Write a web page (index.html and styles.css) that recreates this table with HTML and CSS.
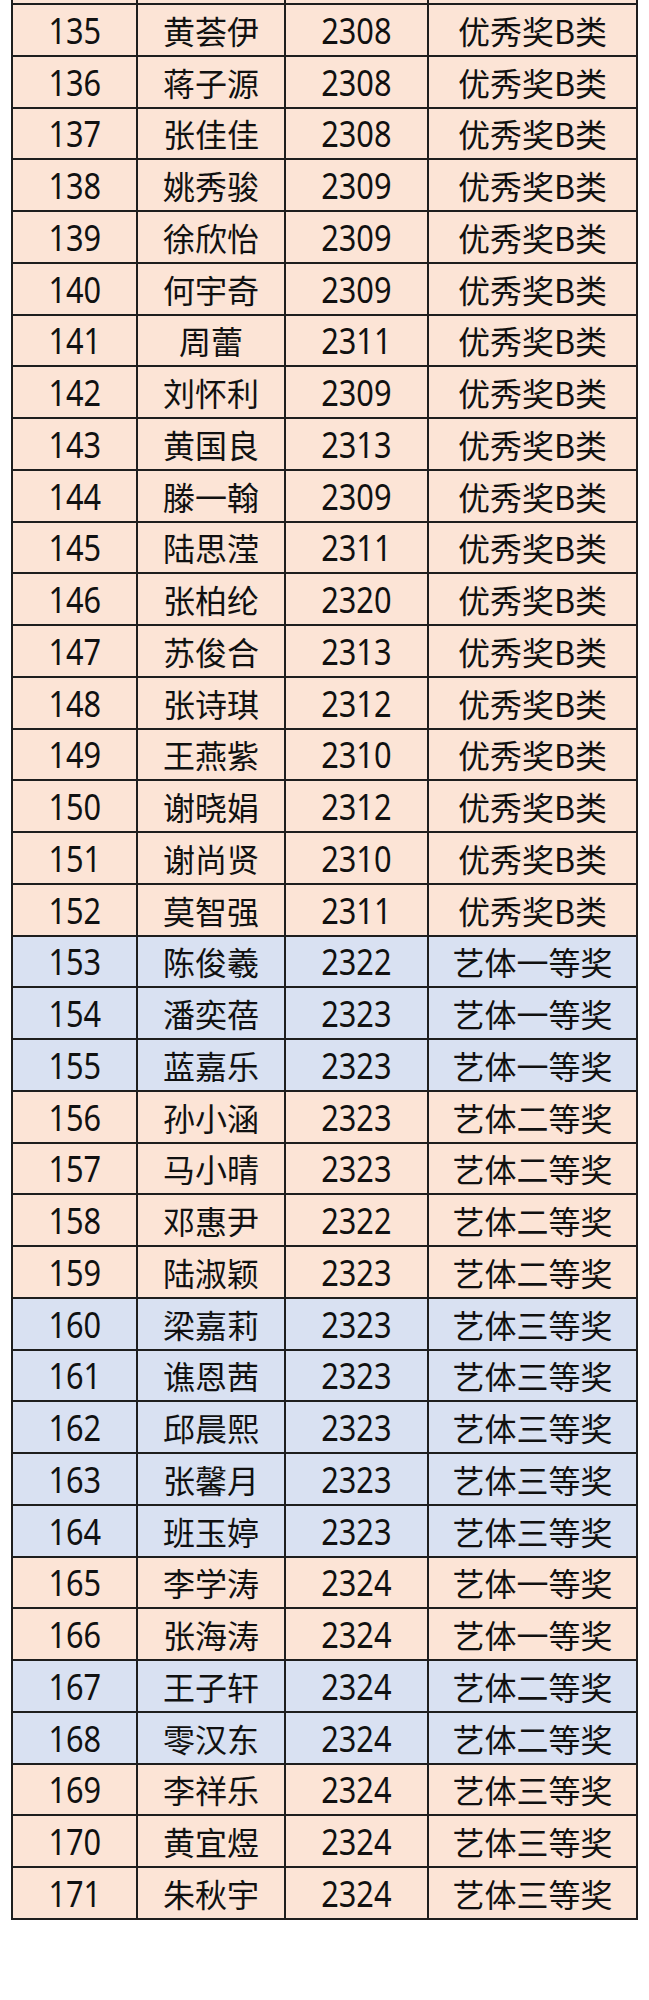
FILE: index.html
```html
<!DOCTYPE html>
<html lang="zh-CN">
<head>
<meta charset="utf-8">
<title>获奖名单</title>
<link rel="stylesheet" href="styles.css">
</head>
<body>
<div class="sheet">
<table class="awards">
<colgroup><col class="c1"><col class="c2"><col class="c3"><col class="c4"></colgroup>
<tbody>
<tr class="stub peach"><td></td><td></td><td></td><td></td></tr>
<tr class="peach"><td><span class="num">135</span></td><td><span class="txt">黄荟伊</span></td><td><span class="num">2308</span></td><td><span class="txt">优秀奖B类</span></td></tr>
<tr class="peach"><td><span class="num">136</span></td><td><span class="txt">蒋子源</span></td><td><span class="num">2308</span></td><td><span class="txt">优秀奖B类</span></td></tr>
<tr class="peach"><td><span class="num">137</span></td><td><span class="txt">张佳佳</span></td><td><span class="num">2308</span></td><td><span class="txt">优秀奖B类</span></td></tr>
<tr class="peach"><td><span class="num">138</span></td><td><span class="txt">姚秀骏</span></td><td><span class="num">2309</span></td><td><span class="txt">优秀奖B类</span></td></tr>
<tr class="peach"><td><span class="num">139</span></td><td><span class="txt">徐欣怡</span></td><td><span class="num">2309</span></td><td><span class="txt">优秀奖B类</span></td></tr>
<tr class="peach"><td><span class="num">140</span></td><td><span class="txt">何宇奇</span></td><td><span class="num">2309</span></td><td><span class="txt">优秀奖B类</span></td></tr>
<tr class="peach"><td><span class="num">141</span></td><td><span class="txt">周蕾</span></td><td><span class="num">2311</span></td><td><span class="txt">优秀奖B类</span></td></tr>
<tr class="peach"><td><span class="num">142</span></td><td><span class="txt">刘怀利</span></td><td><span class="num">2309</span></td><td><span class="txt">优秀奖B类</span></td></tr>
<tr class="peach"><td><span class="num">143</span></td><td><span class="txt">黄国良</span></td><td><span class="num">2313</span></td><td><span class="txt">优秀奖B类</span></td></tr>
<tr class="peach"><td><span class="num">144</span></td><td><span class="txt">滕一翰</span></td><td><span class="num">2309</span></td><td><span class="txt">优秀奖B类</span></td></tr>
<tr class="peach"><td><span class="num">145</span></td><td><span class="txt">陆思滢</span></td><td><span class="num">2311</span></td><td><span class="txt">优秀奖B类</span></td></tr>
<tr class="peach"><td><span class="num">146</span></td><td><span class="txt">张柏纶</span></td><td><span class="num">2320</span></td><td><span class="txt">优秀奖B类</span></td></tr>
<tr class="peach"><td><span class="num">147</span></td><td><span class="txt">苏俊合</span></td><td><span class="num">2313</span></td><td><span class="txt">优秀奖B类</span></td></tr>
<tr class="peach"><td><span class="num">148</span></td><td><span class="txt">张诗琪</span></td><td><span class="num">2312</span></td><td><span class="txt">优秀奖B类</span></td></tr>
<tr class="peach"><td><span class="num">149</span></td><td><span class="txt">王燕紫</span></td><td><span class="num">2310</span></td><td><span class="txt">优秀奖B类</span></td></tr>
<tr class="peach"><td><span class="num">150</span></td><td><span class="txt">谢晓娟</span></td><td><span class="num">2312</span></td><td><span class="txt">优秀奖B类</span></td></tr>
<tr class="peach"><td><span class="num">151</span></td><td><span class="txt">谢尚贤</span></td><td><span class="num">2310</span></td><td><span class="txt">优秀奖B类</span></td></tr>
<tr class="peach"><td><span class="num">152</span></td><td><span class="txt">莫智强</span></td><td><span class="num">2311</span></td><td><span class="txt">优秀奖B类</span></td></tr>
<tr class="blue"><td><span class="num">153</span></td><td><span class="txt">陈俊羲</span></td><td><span class="num">2322</span></td><td><span class="txt">艺体一等奖</span></td></tr>
<tr class="blue"><td><span class="num">154</span></td><td><span class="txt">潘奕蓓</span></td><td><span class="num">2323</span></td><td><span class="txt">艺体一等奖</span></td></tr>
<tr class="blue"><td><span class="num">155</span></td><td><span class="txt">蓝嘉乐</span></td><td><span class="num">2323</span></td><td><span class="txt">艺体一等奖</span></td></tr>
<tr class="peach"><td><span class="num">156</span></td><td><span class="txt">孙小涵</span></td><td><span class="num">2323</span></td><td><span class="txt">艺体二等奖</span></td></tr>
<tr class="peach"><td><span class="num">157</span></td><td><span class="txt">马小晴</span></td><td><span class="num">2323</span></td><td><span class="txt">艺体二等奖</span></td></tr>
<tr class="peach"><td><span class="num">158</span></td><td><span class="txt">邓惠尹</span></td><td><span class="num">2322</span></td><td><span class="txt">艺体二等奖</span></td></tr>
<tr class="peach"><td><span class="num">159</span></td><td><span class="txt">陆淑颖</span></td><td><span class="num">2323</span></td><td><span class="txt">艺体二等奖</span></td></tr>
<tr class="blue"><td><span class="num">160</span></td><td><span class="txt">梁嘉莉</span></td><td><span class="num">2323</span></td><td><span class="txt">艺体三等奖</span></td></tr>
<tr class="blue"><td><span class="num">161</span></td><td><span class="txt">谯恩茜</span></td><td><span class="num">2323</span></td><td><span class="txt">艺体三等奖</span></td></tr>
<tr class="blue"><td><span class="num">162</span></td><td><span class="txt">邱晨熙</span></td><td><span class="num">2323</span></td><td><span class="txt">艺体三等奖</span></td></tr>
<tr class="blue"><td><span class="num">163</span></td><td><span class="txt">张馨月</span></td><td><span class="num">2323</span></td><td><span class="txt">艺体三等奖</span></td></tr>
<tr class="blue"><td><span class="num">164</span></td><td><span class="txt">班玉婷</span></td><td><span class="num">2323</span></td><td><span class="txt">艺体三等奖</span></td></tr>
<tr class="peach"><td><span class="num">165</span></td><td><span class="txt">李学涛</span></td><td><span class="num">2324</span></td><td><span class="txt">艺体一等奖</span></td></tr>
<tr class="peach"><td><span class="num">166</span></td><td><span class="txt">张海涛</span></td><td><span class="num">2324</span></td><td><span class="txt">艺体一等奖</span></td></tr>
<tr class="blue"><td><span class="num">167</span></td><td><span class="txt">王子轩</span></td><td><span class="num">2324</span></td><td><span class="txt">艺体二等奖</span></td></tr>
<tr class="blue"><td><span class="num">168</span></td><td><span class="txt">零汉东</span></td><td><span class="num">2324</span></td><td><span class="txt">艺体二等奖</span></td></tr>
<tr class="peach"><td><span class="num">169</span></td><td><span class="txt">李祥乐</span></td><td><span class="num">2324</span></td><td><span class="txt">艺体三等奖</span></td></tr>
<tr class="peach"><td><span class="num">170</span></td><td><span class="txt">黄宜煜</span></td><td><span class="num">2324</span></td><td><span class="txt">艺体三等奖</span></td></tr>
<tr class="peach"><td><span class="num">171</span></td><td><span class="txt">朱秋宇</span></td><td><span class="num">2324</span></td><td><span class="txt">艺体三等奖</span></td></tr>
</tbody>
</table>
</div>
</body>
</html>
```
FILE: styles.css
```css
html, body {
  margin: 0;
  padding: 0;
  background: #ffffff;
}

.sheet {
  padding-left: 11px;
}

.awards {
  border-collapse: collapse;
  table-layout: fixed;
  width: 627px;
  font-family: "Noto Sans CJK SC", "Noto Sans", sans-serif;
  font-size: 32px;
  color: #111111;
}

.c1 { width: 125px; }
.c2 { width: 148px; }
.c3 { width: 143px; }
.c4 { width: 209px; }

.awards td {
  border: 2px solid #1e1e1e;
  padding: 0;
  height: 49.76px;
  text-align: center;
  vertical-align: middle;
  line-height: 36px;
  white-space: nowrap;
}

.awards tr.stub td {
  border-top: none;
  height: 3px;
  line-height: 0;
}

.peach td { background: #fce4d6; }
.blue td { background: #d9e1f2; }

.txt {
  display: inline-block;
  line-height: 36px;
}

.num {
  display: inline-block;
  font-family: "Noto Sans", "Noto Sans CJK SC", sans-serif;
  font-size: 37px;
  line-height: 36px;
  transform: scaleX(0.83);
}
```
